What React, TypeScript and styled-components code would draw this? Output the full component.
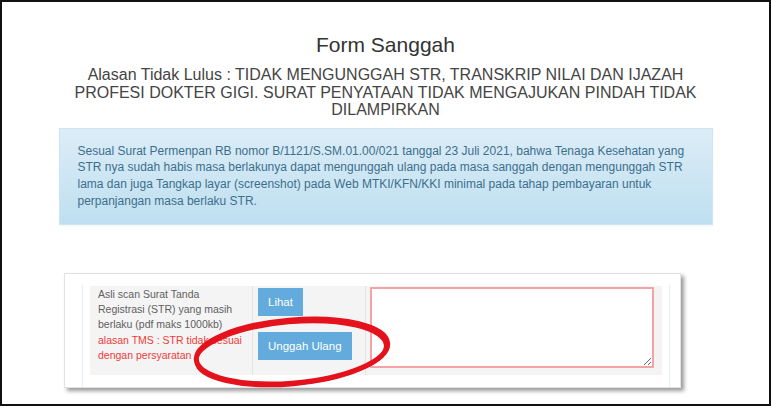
import styled, { createGlobalStyle } from 'styled-components'

const GlobalStyle = createGlobalStyle`
  html, body {
    margin: 0;
    padding: 0;
    background: #ffffff;
  }
  body {
    font-family: "Liberation Sans", Arial, sans-serif;
  }
`

const Frame = styled.div`
  position: relative;
  box-sizing: border-box;
  width: 771px;
  height: 406px;
  border: 2px solid #111;
  background: #fff;
  overflow: hidden;
  display: flex;
  flex-direction: column;
  align-items: center;
`

const Title = styled.h2`
  margin: 31px 0 0;
  font-size: 21px;
  line-height: 24px;
  font-weight: 400;
  color: #333;
  text-align: center;
`

const Reason = styled.h4`
  margin: 9px 0 0;
  width: 640px;
  font-size: 16px;
  line-height: 17.6px;
  font-weight: 400;
  color: #444;
  text-align: center;
`

const InfoBox = styled.div`
  box-sizing: border-box;
  width: 654px;
  height: 97px;
  margin-top: 9px;
  padding: 14px 18px 0;
  background: linear-gradient(to bottom, #dcedf7 0%, #bedff0 100%);
  border: 1px solid #cfe6f2;
  box-shadow: 0 1px 2px rgba(0, 0, 0, 0.05);
  font-size: 12px;
  line-height: 16.7px;
  color: #3d6f8c;
  white-space: nowrap;
`

const Panel = styled.div`
  align-self: flex-start;
  box-sizing: border-box;
  width: 617px;
  height: 115px;
  margin: 48px 0 0 62px;
  padding: 11px 0 0 17px;
  background: #fff;
  border: 1px solid #e2e2e2;
  box-shadow: 3px 3px 4px rgba(0, 0, 0, 0.4);
`

const TableWrap = styled.div`
  box-sizing: border-box;
  width: 588px;
  padding: 1px 7px 12px;
  border-left: 1px solid #e4eff6;
  border-right: 1px solid #e4eff6;
`

const Row = styled.div`
  display: grid;
  grid-template-columns: 162px 113px 1fr;
  height: 89px;
  background: #f4f4f4;
`

const Cell = styled.div<{ $divider?: boolean }>`
  box-sizing: border-box;
  padding: 2px 5px 0;
  border-left: ${(p) => (p.$divider ? '1px solid #e4e4e4' : 'none')};
`

const LabelCell = styled(Cell)`
  padding: 1px 4px 0 8px;
  font-size: 10.5px;
  line-height: 15.3px;
  color: #606060;
`

const Warn = styled.span`
  color: #f03a3a;
`

const ButtonCell = styled(Cell)`
  display: flex;
  flex-direction: column;
  align-items: flex-start;
  gap: 16px;
`

const ActionButton = styled.button`
  height: 28px;
  padding: 0 10px;
  border: none;
  border-radius: 0;
  background: #63abdc;
  color: #fff;
  font-family: "Liberation Sans", Arial, sans-serif;
  font-size: 11.5px;
  cursor: pointer;
`

const NoteCell = styled(Cell)`
  padding: 1px 7px 0 4px;
`

const Note = styled.textarea`
  box-sizing: border-box;
  display: block;
  width: 284px;
  height: 81px;
  margin: 0;
  border: 2px solid #f3a3a3;
  border-radius: 1px;
  background: #fff;
  resize: vertical;
  outline: none;
`

const Mark = styled.svg`
  position: absolute;
  left: 184px;
  top: 306px;
  pointer-events: none;
`

export default function App() {
  return (
    <>
      <GlobalStyle />
      <Frame>
        <Title>Form Sanggah</Title>
        <Reason>
          Alasan Tidak Lulus : TIDAK MENGUNGGAH STR, TRANSKRIP NILAI DAN IJAZAH PROFESI DOKTER GIGI. SURAT
          PENYATAAN TIDAK MENGAJUKAN PINDAH TIDAK DILAMPIRKAN
        </Reason>
        <InfoBox>
          Sesual Surat Permenpan RB nomor B/1121/S.SM.01.00/021 tanggal 23 Juli 2021, bahwa Tenaga Kesehatan yang
          <br />
          STR nya sudah habis masa berlakunya dapat mengunggah ulang pada masa sanggah dengan mengunggah STR
          <br />
          lama dan juga Tangkap layar (screenshot) pada Web MTKI/KFN/KKI minimal pada tahap pembayaran untuk
          <br />
          perpanjangan masa berlaku STR.
        </InfoBox>
        <Panel>
          <TableWrap>
            <Row>
              <LabelCell>
                Asli scan Surat Tanda
                <br />
                Registrasi (STR) yang masih
                <br />
                berlaku (pdf maks 1000kb)
                <br />
                <Warn>
                  alasan TMS : STR tidak sesuai
                  <br />
                  dengan persyaratan
                </Warn>
              </LabelCell>
              <ButtonCell $divider>
                <ActionButton>Lihat</ActionButton>
                <ActionButton>Unggah Ulang</ActionButton>
              </ButtonCell>
              <NoteCell $divider>
                <Note />
              </NoteCell>
            </Row>
          </TableWrap>
        </Panel>
        <Mark width="216" height="88" viewBox="0 0 216 88">
          <ellipse cx="106" cy="43.5" rx="96" ry="31.5" fill="none" stroke="#e3121c" strokeWidth="5" transform="rotate(-5 106 43.5)" />
          <ellipse cx="105" cy="45.5" rx="95" ry="31" fill="none" stroke="#e3121c" strokeWidth="3.5" transform="rotate(-5 105 45.5)" />
        </Mark>
      </Frame>
    </>
  )
}
